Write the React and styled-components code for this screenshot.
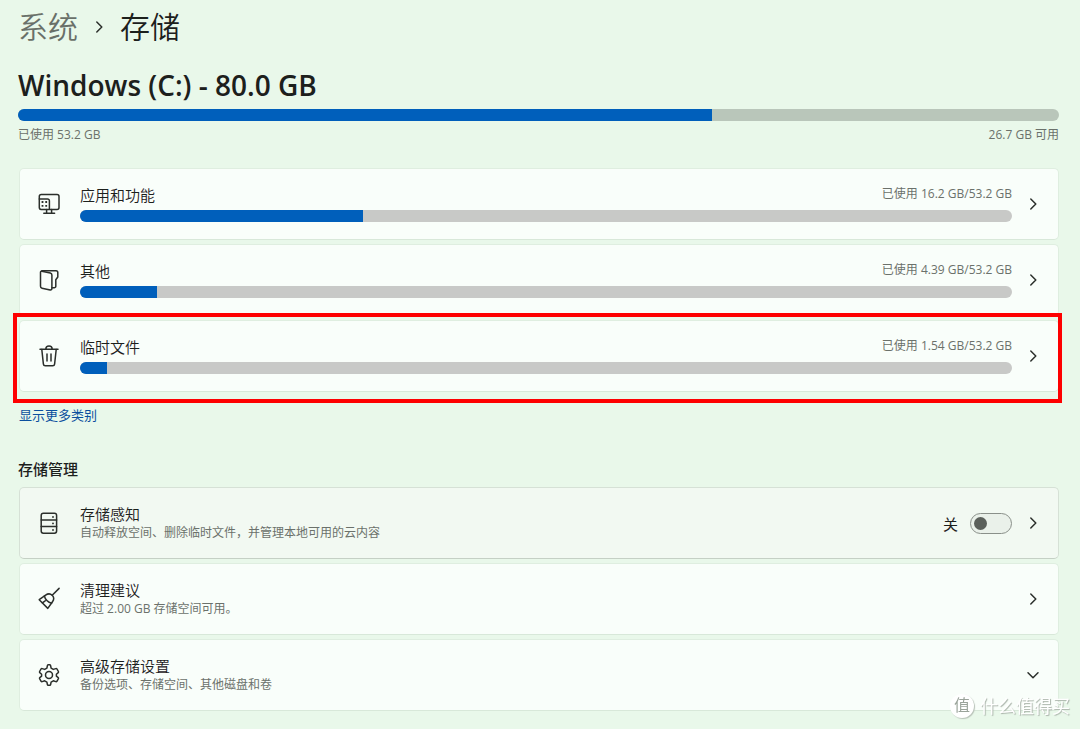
import React, { useState } from "react";
import styled, { createGlobalStyle } from "styled-components";

const GlobalStyle = createGlobalStyle`
  * {
    box-sizing: border-box;
  }
  body {
    margin: 0;
    background-color: #e9f8ea;
    color: #1c201c;
    font-family: "Open Sans", "Noto Sans CJK SC", sans-serif;
    font-size: 15px;
  }
`;

const Page = styled.main`
  padding: 8px 21px 16px 18px;
`;

const Breadcrumb = styled.nav`
  display: flex;
  align-items: center;
  gap: 13px;
  height: 38px;
  font-size: 30px;
  font-weight: 350;
  line-height: 38px;
  color: #1c201c;
`;

const BreadcrumbLink = styled.a`
  color: #697069;
  text-decoration: none;
`;

const DriveTitle = styled.h1`
  margin: 20px 0 0;
  font-size: 28px;
  font-weight: 600;
  line-height: 38px;
`;

const Track = styled.div`
  height: 12px;
  margin-top: 5px;
  border-radius: 6px;
  overflow: hidden;
  background-color: ${(props) => (props.$main ? "#b9c6ba" : "#c8c9c7")};
`;

const Fill = styled.div`
  height: 100%;
  background-color: #005fbb;
`;

const DriveLegend = styled.div`
  display: flex;
  justify-content: space-between;
  margin-top: 5px;
`;

const Caption = styled.span`
  font-size: 12px;
  line-height: 18px;
  color: #6b716b;
`;

const CardList = styled.div`
  display: flex;
  flex-direction: column;
  gap: 4px;
  margin-top: ${(props) => props.$top};
  padding-left: 1px;
`;

const Card = styled.div`
  position: relative;
  display: flex;
  align-items: center;
  min-height: 72px;
  padding-left: 17px;
  padding-right: 17px;
  border: 1px solid ${(props) => (props.$hover ? "#d6e1d6" : "#dfeee0")};
  border-bottom-color: ${(props) => (props.$hover ? "#c5d0c5" : "#d8e8d9")};
  border-radius: 5px;
  background-color: ${(props) => (props.$hover ? "#f2f9f2" : "#f9fefa")};
  color: inherit;
  text-decoration: none;
`;

const IconBox = styled.span`
  display: flex;
  width: 24px;
  height: 24px;
  margin-right: 19px;
`;

const Body = styled.div`
  flex: 1;
  min-width: 0;
`;

const UsageBody = styled(Body)`
  padding-bottom: 2px;
`;

const LabelRow = styled.div`
  display: flex;
  justify-content: space-between;
  height: 20px;
`;

const Label = styled.div`
  font-size: 15px;
  font-weight: 350;
  line-height: 20px;
`;

const Description = styled.div`
  font-size: 12px;
  line-height: 18px;
  color: #6b716b;
`;

const ChevronBox = styled.span`
  display: flex;
  margin-left: 13px;
`;

const ChevronButton = styled.button`
  display: flex;
  margin: 0 0 0 13px;
  padding: 0;
  border: none;
  background: none;
  color: inherit;
  cursor: pointer;
`;

const Highlight = styled.div`
  position: absolute;
  top: -8px;
  right: -4px;
  bottom: -12px;
  left: -7px;
  z-index: 1;
  border: 4px solid #fe0000;
  pointer-events: none;
`;

const MoreLink = styled.a`
  display: inline-block;
  margin: 13px 0 0 1px;
  font-size: 13px;
  line-height: 20px;
  color: #0b4f9e;
  text-decoration: none;
`;

const SectionTitle = styled.h2`
  margin: 33px 0 0;
  font-size: 15px;
  font-weight: 500;
  line-height: 22px;
`;

const SwitchLabel = styled.label`
  display: flex;
  align-items: center;
  gap: 12px;
`;

const Switch = styled.input`
  appearance: none;
  display: flex;
  align-items: center;
  justify-content: ${(props) => (props.checked ? "flex-end" : "flex-start")};
  width: 42px;
  height: 21px;
  margin: 0;
  padding: 0 3px;
  border: 1px solid #8a908a;
  border-radius: 11px;
  background-color: ${(props) => (props.checked ? "#005fbb" : "#eaf1ea")};

  &::before {
    content: "";
    width: 13px;
    height: 13px;
    border-radius: 50%;
    background-color: ${(props) => (props.checked ? "#fff" : "#5b605b")};
  }
`;

const Watermark = styled.div`
  position: fixed;
  right: 10px;
  bottom: 10px;
  z-index: 2;
  display: flex;
  align-items: center;
  gap: 6px;
  font-size: 18px;
  line-height: 26px;
  color: #fff;
  text-shadow: 1px 1px 1px #a8b2a8;
`;

const WatermarkBadge = styled.span`
  width: 24px;
  height: 24px;
  border-radius: 50%;
  background-color: #fff;
  box-shadow: 1px 1px 1px #b8c2b8;
  color: #9aa39a;
  font-size: 16px;
  line-height: 23px;
  text-align: center;
  text-shadow: none;
`;

const Icon = ({ children, size = 24 }) => (
  <svg
    width={size}
    height={size}
    viewBox={`0 0 ${size} ${size}`}
    fill="none"
    stroke="#2b2f2b"
    strokeWidth="1.5"
    strokeLinecap="round"
    strokeLinejoin="round"
    aria-hidden="true"
  >
    {children}
  </svg>
);

const AppsIcon = () => (
  <Icon>
    <path d="M2.3 7V4.6A2 2 0 0 1 4.3 2.6H20A2 2 0 0 1 22 4.6V15.4A2 2 0 0 1 20 17.4H13" />
    <path d="M2.3 7H10.6A1.8 1.8 0 0 1 12.4 8.8V17.4H4.1A1.8 1.8 0 0 1 2.3 15.6Z" />
    <path d="M9.6 17.5V21.2M14.6 17.5V21.2M6.8 21.3H17.6" />
    <path
      d="M4.6 9.1H6.4V10.9H4.6ZM8.3 9.1H10.1V10.9H8.3ZM4.6 13H6.4V14.8H4.6ZM8.3 13H10.1V14.8H8.3Z"
      fill="#2b2f2b"
      stroke="none"
    />
  </Icon>
);

const OtherIcon = () => (
  <Icon>
    <path d="M4.8 3.2L13.3 5A2 2 0 0 1 14.9 7V20.5A1.4 1.4 0 0 1 13.2 21.9L5 20.2A1.9 1.9 0 0 1 3.5 18.3V4.2A1 1 0 0 1 4.8 3.2Z" />
    <path d="M4.8 2.8H19A1.8 1.8 0 0 1 20.8 4.6V9L18.8 11.8V18.2A1.6 1.6 0 0 1 17.2 19.8H15" />
  </Icon>
);

const TrashIcon = () => (
  <Icon>
    <path d="M3 5.3H21M8.8 5.1A3.2 3.2 0 0 1 15.2 5.1" />
    <path d="M4.8 5.5L6.4 20.1A1.9 1.9 0 0 0 8.3 21.8H15.7A1.9 1.9 0 0 0 17.6 20.1L19.2 5.5" />
    <path d="M10 10V17M14 10V17" />
  </Icon>
);

const StorageIcon = () => (
  <Icon>
    <rect x="4.2" y="2.3" width="15.4" height="20" rx="2.2" />
    <path d="M4.2 9H19.6M4.2 15.6H19.6" />
    <path d="M16 5.9V6M16 12.3V12.4M16 18.9V19" strokeWidth="1.8" />
  </Icon>
);

const BroomIcon = () => (
  <Icon>
    <path d="M22.1 1.4L15.2 8.3" />
    <path d="M8.6 8.2C10.8 6.6 13.4 6.6 15.2 8.3C16.9 10 17 12.7 15.5 14.8L10.8 21.4L2.2 12.7Z" />
    <path d="M7.4 8.9C8 12.3 11 15.6 14.6 16.2M5.4 15.9L8.2 13.8" />
  </Icon>
);

const GearIcon = () => (
  <Icon>
    <path d="M9.9 5.1L10.4 2.6Q10.5 1.9 11.2 1.8H12.8Q13.5 1.9 13.6 2.6L14.1 5.1L16.3 6.4L18.8 5.6Q19.5 5.4 19.9 5.9L21.4 8.5Q21.7 9.1 21.2 9.6L19.4 11.2V13.2L21.2 14.6Q21.7 15.1 21.4 15.7L19.9 18.3Q19.5 18.8 18.8 18.6L16.3 17.8L14.1 19.1L13.6 21.6Q13.5 22.2 12.8 22.2H11.2Q10.5 22.2 10.4 21.6L9.9 19.1L7.7 17.8L5.2 18.6Q4.5 18.8 4.1 18.3L2.6 15.7Q2.3 15.1 2.8 14.6L4.6 13.2V11.2L2.8 9.6Q2.3 9.1 2.6 8.5L4.1 5.9Q4.5 5.4 5.2 5.6L7.7 6.4Z" />
    <circle cx="12" cy="12.1" r="3.5" />
  </Icon>
);

const ChevronRight = () => (
  <Icon size={16}>
    <path d="M5.8 3L10.8 8L5.8 13" />
  </Icon>
);

const ChevronDown = () => (
  <Icon size={16}>
    <path d="M3 5.8L8 10.8L13 5.8" />
  </Icon>
);

const categories = [
  { id: "apps", name: "应用和功能", used: "16.2", percent: 30.4, icon: <AppsIcon /> },
  { id: "other", name: "其他", used: "4.39", percent: 8.3, icon: <OtherIcon /> },
  { id: "temp", name: "临时文件", used: "1.54", percent: 2.9, icon: <TrashIcon />, marked: true },
];

const UsageBar = ({ percent, label, main }) => (
  <Track
    $main={main}
    role="progressbar"
    aria-label={label}
    aria-valuenow={percent}
    aria-valuemin={0}
    aria-valuemax={100}
  >
    <Fill style={{ width: `${percent}%` }} />
  </Track>
);

const CategoryCard = ({ id, name, used, percent, icon, marked }) => (
  <Card as="a" href={`#${id}`}>
    <IconBox>{icon}</IconBox>
    <UsageBody>
      <LabelRow>
        <Label>{name}</Label>
        <Caption>已使用 {used} GB/53.2 GB</Caption>
      </LabelRow>
      <UsageBar percent={percent} label={name} />
    </UsageBody>
    <ChevronBox>
      <ChevronRight />
    </ChevronBox>
    {marked && <Highlight />}
  </Card>
);

export default function App() {
  const [sense, setSense] = useState(false);

  return (
    <>
      <GlobalStyle />
      <Page>
        <Breadcrumb>
          <BreadcrumbLink href="#system">系统</BreadcrumbLink>
          <ChevronRight />
          <span>存储</span>
        </Breadcrumb>

        <DriveTitle>Windows (C:) - 80.0 GB</DriveTitle>
        <UsageBar main percent={66.7} label="Windows (C:)" />
        <DriveLegend>
          <Caption>已使用 53.2 GB</Caption>
          <Caption>26.7 GB 可用</Caption>
        </DriveLegend>

        <CardList $top="24px">
          {categories.map((c) => (
            <CategoryCard key={c.id} {...c} />
          ))}
        </CardList>
        <MoreLink href="#more">显示更多类别</MoreLink>

        <SectionTitle>存储管理</SectionTitle>
        <CardList $top="7px">
          <Card $hover>
            <IconBox>
              <StorageIcon />
            </IconBox>
            <Body>
              <Label>存储感知</Label>
              <Description>自动释放空间、删除临时文件，并管理本地可用的云内容</Description>
            </Body>
            <SwitchLabel>
              {sense ? "开" : "关"}
              <Switch
                type="checkbox"
                role="switch"
                aria-label="存储感知"
                checked={sense}
                onChange={(e) => setSense(e.target.checked)}
              />
            </SwitchLabel>
            <ChevronButton type="button" aria-label="存储感知">
              <ChevronRight />
            </ChevronButton>
          </Card>

          <Card as="a" href="#cleanup">
            <IconBox>
              <BroomIcon />
            </IconBox>
            <Body>
              <Label>清理建议</Label>
              <Description>超过 2.00 GB 存储空间可用。</Description>
            </Body>
            <ChevronBox>
              <ChevronRight />
            </ChevronBox>
          </Card>

          <Card>
            <IconBox>
              <GearIcon />
            </IconBox>
            <Body>
              <Label>高级存储设置</Label>
              <Description>备份选项、存储空间、其他磁盘和卷</Description>
            </Body>
            <ChevronButton type="button" aria-label="高级存储设置">
              <ChevronDown />
            </ChevronButton>
          </Card>
        </CardList>
      </Page>

      <Watermark>
        <WatermarkBadge>值</WatermarkBadge>
        <span>什么值得买</span>
      </Watermark>
    </>
  );
}
